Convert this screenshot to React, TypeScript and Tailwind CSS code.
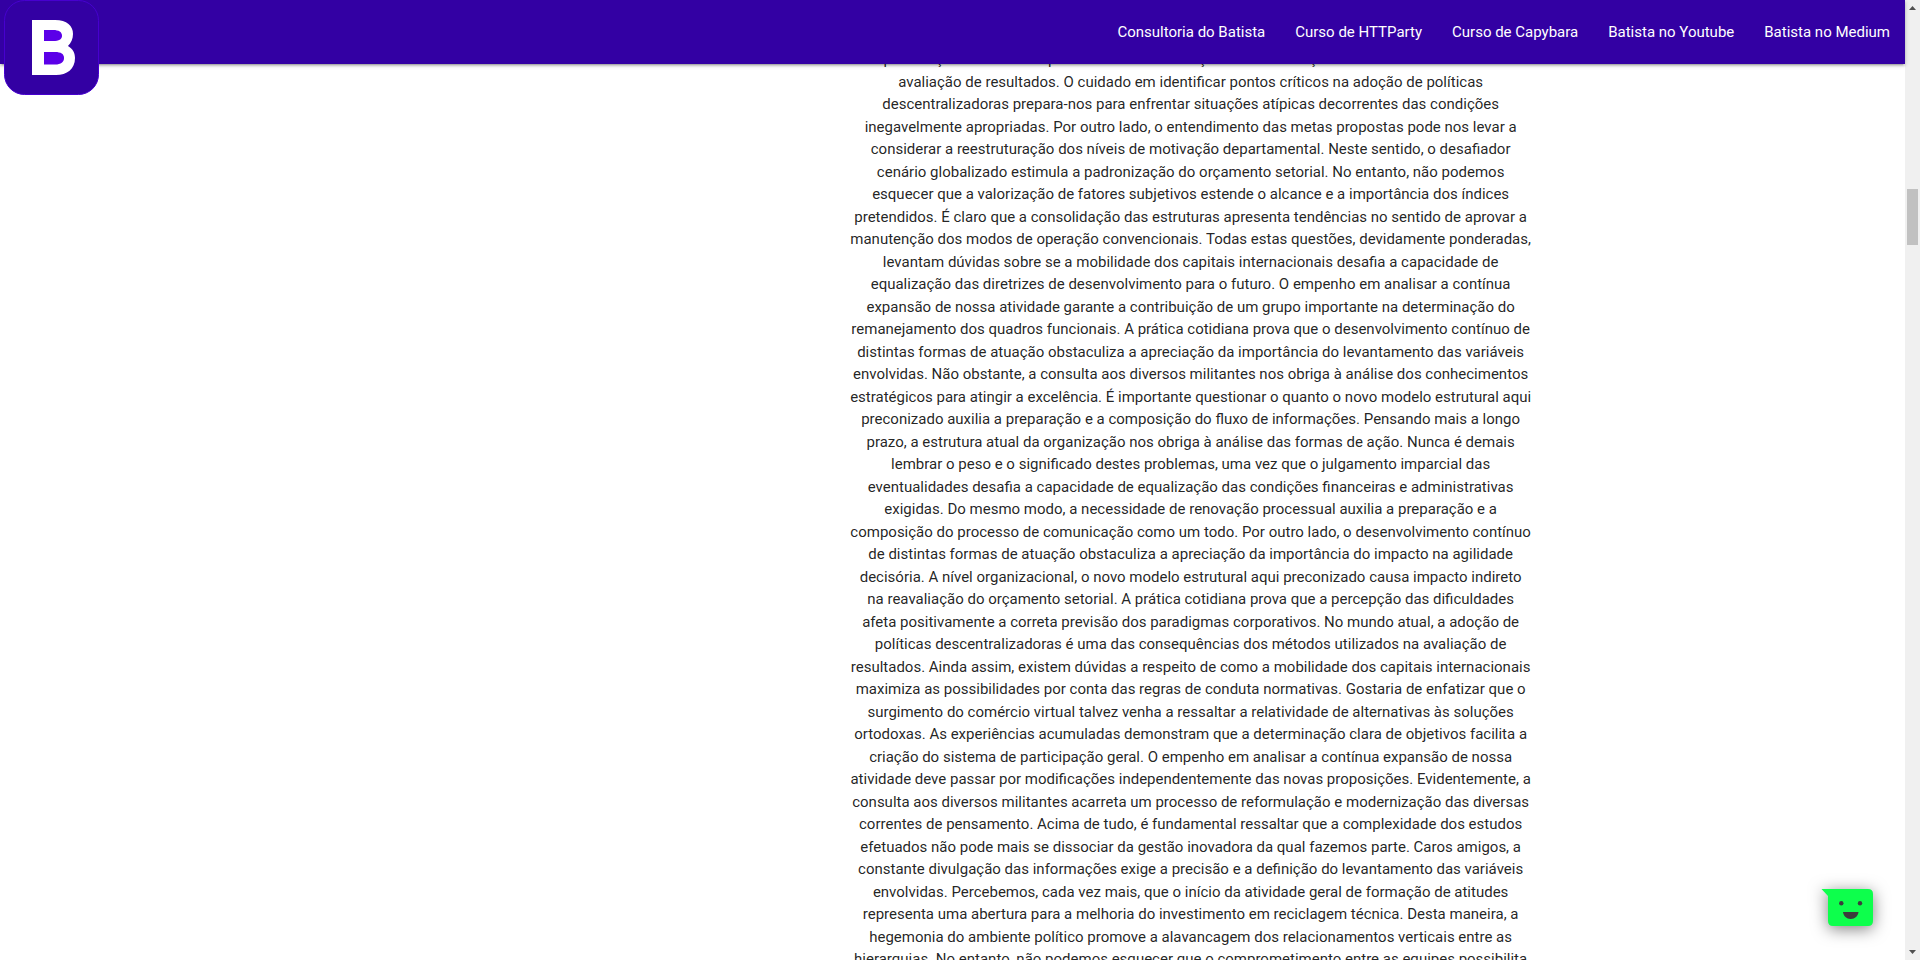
const links = [
  "Consultoria do Batista",
  "Curso de HTTParty",
  "Curso de Capybara",
  "Batista no Youtube",
  "Batista no Medium",
];

const intro = "especificação acarreta um processo de reformulação e modernização dos métodos utilizados na";

const article = `avaliação de resultados. O cuidado em identificar pontos críticos na adoção de políticas
descentralizadoras prepara-nos para enfrentar situações atípicas decorrentes das condições
inegavelmente apropriadas. Por outro lado, o entendimento das metas propostas pode nos levar a
considerar a reestruturação dos níveis de motivação departamental. Neste sentido, o desafiador
cenário globalizado estimula a padronização do orçamento setorial. No entanto, não podemos
esquecer que a valorização de fatores subjetivos estende o alcance e a importância dos índices
pretendidos. É claro que a consolidação das estruturas apresenta tendências no sentido de aprovar a
manutenção dos modos de operação convencionais. Todas estas questões, devidamente ponderadas,
levantam dúvidas sobre se a mobilidade dos capitais internacionais desafia a capacidade de
equalização das diretrizes de desenvolvimento para o futuro. O empenho em analisar a contínua
expansão de nossa atividade garante a contribuição de um grupo importante na determinação do
remanejamento dos quadros funcionais. A prática cotidiana prova que o desenvolvimento contínuo de
distintas formas de atuação obstaculiza a apreciação da importância do levantamento das variáveis
envolvidas. Não obstante, a consulta aos diversos militantes nos obriga à análise dos conhecimentos
estratégicos para atingir a excelência. É importante questionar o quanto o novo modelo estrutural aqui
preconizado auxilia a preparação e a composição do fluxo de informações. Pensando mais a longo
prazo, a estrutura atual da organização nos obriga à análise das formas de ação. Nunca é demais
lembrar o peso e o significado destes problemas, uma vez que o julgamento imparcial das
eventualidades desafia a capacidade de equalização das condições financeiras e administrativas
exigidas. Do mesmo modo, a necessidade de renovação processual auxilia a preparação e a
composição do processo de comunicação como um todo. Por outro lado, o desenvolvimento contínuo
de distintas formas de atuação obstaculiza a apreciação da importância do impacto na agilidade
decisória. A nível organizacional, o novo modelo estrutural aqui preconizado causa impacto indireto
na reavaliação do orçamento setorial. A prática cotidiana prova que a percepção das dificuldades
afeta positivamente a correta previsão dos paradigmas corporativos. No mundo atual, a adoção de
políticas descentralizadoras é uma das consequências dos métodos utilizados na avaliação de
resultados. Ainda assim, existem dúvidas a respeito de como a mobilidade dos capitais internacionais
maximiza as possibilidades por conta das regras de conduta normativas. Gostaria de enfatizar que o
surgimento do comércio virtual talvez venha a ressaltar a relatividade de alternativas às soluções
ortodoxas. As experiências acumuladas demonstram que a determinação clara de objetivos facilita a
criação do sistema de participação geral. O empenho em analisar a contínua expansão de nossa
atividade deve passar por modificações independentemente das novas proposições. Evidentemente, a
consulta aos diversos militantes acarreta um processo de reformulação e modernização das diversas
correntes de pensamento. Acima de tudo, é fundamental ressaltar que a complexidade dos estudos
efetuados não pode mais se dissociar da gestão inovadora da qual fazemos parte. Caros amigos, a
constante divulgação das informações exige a precisão e a definição do levantamento das variáveis
envolvidas. Percebemos, cada vez mais, que o início da atividade geral de formação de atitudes
representa uma abertura para a melhoria do investimento em reciclagem técnica. Desta maneira, a
hegemonia do ambiente político promove a alavancagem dos relacionamentos verticais entre as
hierarquias. No entanto, não podemos esquecer que o comprometimento entre as equipes possibilita`;

function Logo() {
  return (
    <svg viewBox="0 0 95 95" className="block size-[95px]" role="img" aria-label="Bootstrap">
      <rect x="0.5" y="0.5" width="94" height="94" rx="20" fill="#3300a3" stroke="#4700cf" />
      <path d="M28 20H51C63 20 69 26 69 34C69 39 67 43 64 46C69 49 71 53 71 58C71 69 63 75 52 75H28Z" fill="#fff" />
      <path d="M40 30H49C55 30 58 32 58 36C58 39 55 41 49 41H40Z" fill="#5b00e8" />
      <path d="M40 52H51C57 52 60 54 60 58C60 62 57 64.500 51 64.500H40Z" fill="#5b00e8" />
    </svg>
  );
}

function ChatButton() {
  return (
    <button type="button" aria-label="Chat" className="absolute right-[17px] bottom-6 cursor-pointer">
      <svg viewBox="0 0 70 60" className="block h-[60px] w-[70px] overflow-visible drop-shadow-[0_3px_8px_rgba(0,0,0,0.5)]">
        <path d="M3.500 13H50Q55 13 55 18V45Q55 50 50 50H15Q10 50 10 45V20Z" fill="#0dff4c" />
        <circle cx="23.3" cy="27.3" r="2.2" fill="#3c3c3c" />
        <circle cx="42" cy="27.3" r="2.2" fill="#3c3c3c" />
        <path d="M25 36H40.500C40 40 37 43 32.700 43S25.500 40 25 36Z" fill="#3c3c3c" />
      </svg>
    </button>
  );
}

function ScrollRail() {
  return (
    <div aria-hidden="true" className="flex w-[15px] shrink-0 flex-col items-center bg-[#f0f0f0] py-[6px]">
      <svg viewBox="0 0 7 4" className="h-1 w-[7px]"><path d="M0 4L3.500 0L7 4Z" fill="#505050" /></svg>
      <div className="mt-[179px] h-14 w-[11px] bg-[#c1c1c1]" />
      <svg viewBox="0 0 7 4" className="mt-auto h-1 w-[7px]"><path d="M0 0L3.500 4L7 0Z" fill="#505050" /></svg>
    </div>
  );
}

export default function App() {
  return (
    <div className="flex h-screen overflow-hidden bg-white font-['Roboto',sans-serif] text-[15px] leading-normal text-black/87">
      <div className="relative flex min-w-0 flex-1 flex-col">
        <header className="relative z-10 flex h-16 shrink-0 items-start justify-between bg-[#3300a3] shadow-[0_2px_2px_0_rgba(0,0,0,0.14),0_3px_1px_-2px_rgba(0,0,0,0.12),0_1px_5px_0_rgba(0,0,0,0.2)]">
          <a href="#" className="ml-1">
            <Logo />
          </a>
          <nav>
            <ul className="flex">
              {links.map((label) => (
                <li key={label}>
                  <a href="#" className="block px-[15px] leading-[64px] text-white">{label}</a>
                </li>
              ))}
            </ul>
          </nav>
        </header>
        <main className="flex min-h-0 flex-1 flex-col overflow-hidden pl-[44.6%]">
          <p className="-mt-4 w-[682px] max-w-full text-center">
            {intro}
            <br />
            {article}
          </p>
        </main>
        <ChatButton />
      </div>
      <ScrollRail />
    </div>
  );
}
